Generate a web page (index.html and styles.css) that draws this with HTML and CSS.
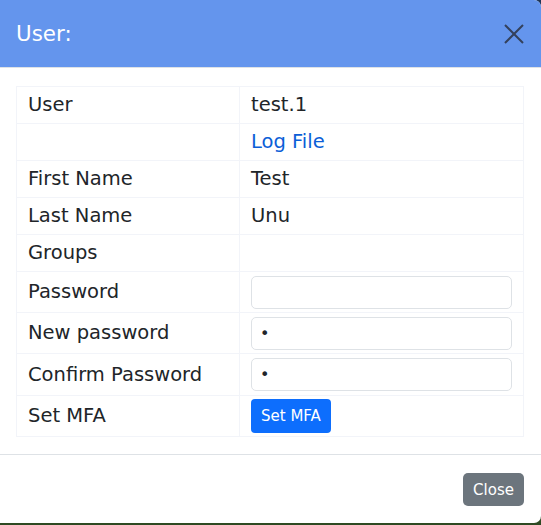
FILE: index.html
```html
<!DOCTYPE html>
<html>
<head>
<meta charset="utf-8">
<link rel="stylesheet" href="styles.css">
</head>
<body>
<div class="modal">
  <div class="modal-header">
    <h5 class="modal-title">User:</h5>
    <button class="btn-close" aria-label="Close">
      <svg width="20" height="20" viewBox="0 0 20 20"><path d="M1 1 L19 19 M19 1 L1 19" stroke="#34415c" stroke-width="2" fill="none"/></svg>
    </button>
  </div>
  <div class="modal-body">
    <table class="info">
      <colgroup><col class="c1"><col class="c2"></colgroup>
      <tr class="r"><td>User</td><td>test.1</td></tr>
      <tr class="r"><td></td><td><a class="link" href="#">Log File</a></td></tr>
      <tr class="r"><td>First Name</td><td>Test</td></tr>
      <tr class="r"><td>Last Name</td><td>Unu</td></tr>
      <tr class="r"><td>Groups</td><td></td></tr>
      <tr class="ri"><td>Password</td><td><input class="field" type="password"></td></tr>
      <tr class="ri"><td>New password</td><td><input class="field" type="password" value="a"></td></tr>
      <tr class="ri2"><td>Confirm Password</td><td><input class="field" type="password" value="a"></td></tr>
      <tr class="ri"><td>Set MFA</td><td><button class="btn-primary">Set MFA</button></td></tr>
    </table>
  </div>
  <div class="modal-footer">
    <button class="btn-secondary">Close</button>
  </div>
</div>
</body>
</html>
```
FILE: styles.css
```css
html, body {
  margin: 0;
  padding: 0;
}
body {
  width: 541px;
  height: 525px;
  background: linear-gradient(180deg, #1d3557 0%, #22303a 60%, #2e4a22 100%);
  font-family: "DejaVu Sans", sans-serif;
  color: #212529;
  overflow: hidden;
}
.modal {
  width: 541px;
  height: 523px;
  background: #fff;
  border-radius: 0 7px 7px 0;
  overflow: hidden;
  display: flex;
  flex-direction: column;
}
.modal-header {
  box-sizing: border-box;
  background: #6495ed;
  border-bottom: 1px solid #dee2e6;
  display: flex;
  align-items: center;
  justify-content: space-between;
  padding: 0 17px 0 16px;
  flex: none;
  height: 68px;
}
.modal-title {
  margin: 0;
  font-size: 21.4px;
  font-weight: normal;
  color: #fff;
  line-height: 1;
}
.btn-close {
  border: 0;
  background: transparent;
  padding: 0;
  width: 20px;
  height: 20px;
  display: flex;
}
.modal-body {
  padding: 18px 17px 17px 16px;
  flex: none;
}
.info {
  width: 508px;
  border-collapse: collapse;
  font-size: 19.5px;
}
.info col.c1 { width: 224px; }
.info td {
  border: 1px solid #f2f4f9;
  padding: 0 11px 0 11px;
  vertical-align: middle;
  line-height: 28px;
}
.info tr.r td { height: 36px; }
.info tr.ri td { height: 40px; }
.info tr.ri2 td { height: 41px; }
.link {
  color: #0b5ed7;
  text-decoration: none;
}
.field {
  display: block;
  width: 261px;
  height: 33px;
  box-sizing: border-box;
  border: 1px solid #dee2e6;
  border-radius: 5px;
  padding: 0 8px;
  font-family: "DejaVu Sans", sans-serif;
  font-size: 16px;
  color: #212529;
  background: #fff;
}
.btn-primary {
  display: block;
  height: 34px;
  padding: 0 10px;
  border: 0;
  border-radius: 4px;
  background: #0d6efd;
  color: #fff;
  font-family: "DejaVu Sans", sans-serif;
  font-size: 15px;
}
.modal-footer {
  border-top: 1px solid #dee2e6;
  flex: 1;
  display: flex;
  justify-content: flex-end;
  align-items: flex-start;
  padding: 18px 17px 0 0;
}
.btn-secondary {
  height: 33px;
  width: 61px;
  padding: 0;
  border: 0;
  border-radius: 5px;
  background: #6c757d;
  color: #fff;
  font-family: "DejaVu Sans", sans-serif;
  font-size: 15px;
}
```
